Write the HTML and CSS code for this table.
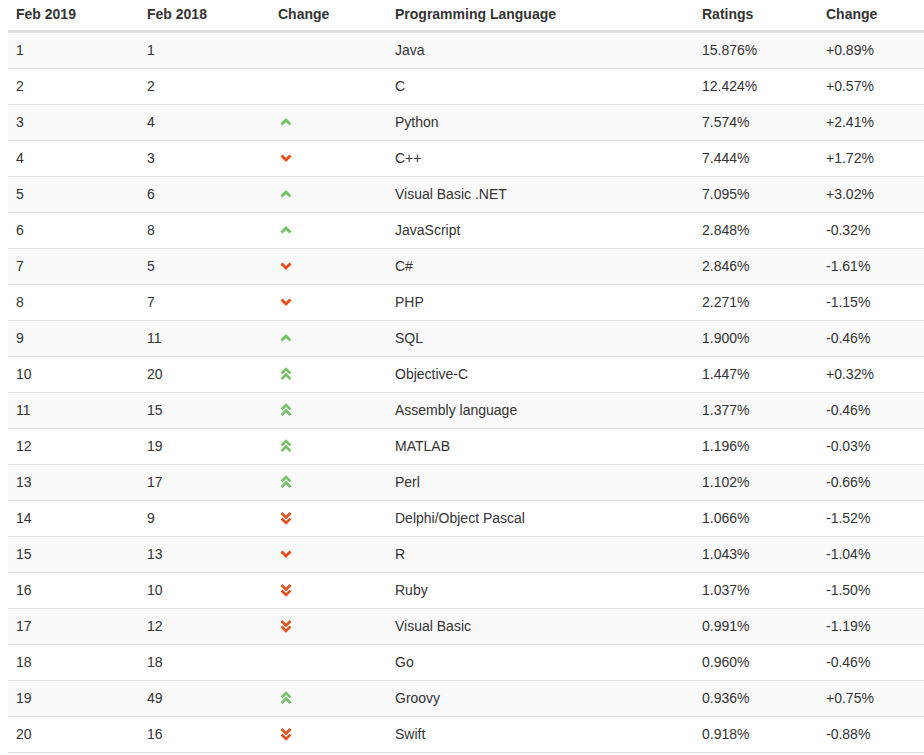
FILE: index.html
```html
<!DOCTYPE html>
<html>
<head>
<meta charset="utf-8">
<link rel="stylesheet" href="styles.css">
</head>
<body>
<svg width="0" height="0" class="defs">
  <defs>
    <symbol id="up1" viewBox="0 0 12 16"><polyline points="1.5,10.5 6,6 10.5,10.5" fill="none" stroke="currentColor" stroke-width="3"/></symbol>
    <symbol id="down1" viewBox="0 0 12 16"><polyline points="1.5,5.5 6,10 10.5,5.5" fill="none" stroke="currentColor" stroke-width="3"/></symbol>
    <symbol id="up2" viewBox="0 0 12 16"><polyline points="1.5,7.5 6,3 10.5,7.5" fill="none" stroke="currentColor" stroke-width="2.6"/><polyline points="1.5,13 6,8.5 10.5,13" fill="none" stroke="currentColor" stroke-width="2.6"/></symbol>
    <symbol id="down2" viewBox="0 0 12 16"><polyline points="1.5,3 6,7.5 10.5,3" fill="none" stroke="currentColor" stroke-width="2.6"/><polyline points="1.5,8.5 6,13 10.5,8.5" fill="none" stroke="currentColor" stroke-width="2.6"/></symbol>
  </defs>
</svg>
<table class="tbl">
  <thead>
    <tr><th class="c1">Feb 2019</th><th class="c2">Feb 2018</th><th class="c3">Change</th><th class="c4">Programming Language</th><th class="c5">Ratings</th><th class="c6">Change</th></tr>
  </thead>
  <tbody>
    <tr><td>1</td><td>1</td><td></td><td>Java</td><td>15.876%</td><td>+0.89%</td></tr>
    <tr><td>2</td><td>2</td><td></td><td>C</td><td>12.424%</td><td>+0.57%</td></tr>
    <tr><td>3</td><td>4</td><td><svg class="ic up"><use href="#up1"/></svg></td><td>Python</td><td>7.574%</td><td>+2.41%</td></tr>
    <tr><td>4</td><td>3</td><td><svg class="ic down"><use href="#down1"/></svg></td><td>C++</td><td>7.444%</td><td>+1.72%</td></tr>
    <tr><td>5</td><td>6</td><td><svg class="ic up"><use href="#up1"/></svg></td><td>Visual Basic .NET</td><td>7.095%</td><td>+3.02%</td></tr>
    <tr><td>6</td><td>8</td><td><svg class="ic up"><use href="#up1"/></svg></td><td>JavaScript</td><td>2.848%</td><td>-0.32%</td></tr>
    <tr><td>7</td><td>5</td><td><svg class="ic down"><use href="#down1"/></svg></td><td>C#</td><td>2.846%</td><td>-1.61%</td></tr>
    <tr><td>8</td><td>7</td><td><svg class="ic down"><use href="#down1"/></svg></td><td>PHP</td><td>2.271%</td><td>-1.15%</td></tr>
    <tr><td>9</td><td>11</td><td><svg class="ic up"><use href="#up1"/></svg></td><td>SQL</td><td>1.900%</td><td>-0.46%</td></tr>
    <tr><td>10</td><td>20</td><td><svg class="ic up"><use href="#up2"/></svg></td><td>Objective-C</td><td>1.447%</td><td>+0.32%</td></tr>
    <tr><td>11</td><td>15</td><td><svg class="ic up"><use href="#up2"/></svg></td><td>Assembly language</td><td>1.377%</td><td>-0.46%</td></tr>
    <tr><td>12</td><td>19</td><td><svg class="ic up"><use href="#up2"/></svg></td><td>MATLAB</td><td>1.196%</td><td>-0.03%</td></tr>
    <tr><td>13</td><td>17</td><td><svg class="ic up"><use href="#up2"/></svg></td><td>Perl</td><td>1.102%</td><td>-0.66%</td></tr>
    <tr><td>14</td><td>9</td><td><svg class="ic down"><use href="#down2"/></svg></td><td>Delphi/Object Pascal</td><td>1.066%</td><td>-1.52%</td></tr>
    <tr><td>15</td><td>13</td><td><svg class="ic down"><use href="#down1"/></svg></td><td>R</td><td>1.043%</td><td>-1.04%</td></tr>
    <tr><td>16</td><td>10</td><td><svg class="ic down"><use href="#down2"/></svg></td><td>Ruby</td><td>1.037%</td><td>-1.50%</td></tr>
    <tr><td>17</td><td>12</td><td><svg class="ic down"><use href="#down2"/></svg></td><td>Visual Basic</td><td>0.991%</td><td>-1.19%</td></tr>
    <tr><td>18</td><td>18</td><td></td><td>Go</td><td>0.960%</td><td>-0.46%</td></tr>
    <tr><td>19</td><td>49</td><td><svg class="ic up"><use href="#up2"/></svg></td><td>Groovy</td><td>0.936%</td><td>+0.75%</td></tr>
    <tr><td>20</td><td>16</td><td><svg class="ic down"><use href="#down2"/></svg></td><td>Swift</td><td>0.918%</td><td>-0.88%</td></tr>
  </tbody>
</table>
</body>
</html>
```
FILE: styles.css
```css
html, body {
  background: #ffffff;
}
body {
  margin: 0 0 0 8px;
  font-family: "Liberation Sans", Arial, sans-serif;
  font-size: 14px;
  color: #333333;
}
.defs {
  position: absolute;
  width: 0;
  height: 0;
  overflow: hidden;
}
.tbl {
  width: 916px;
  border-collapse: separate;
  border-spacing: 0;
  table-layout: fixed;
  border-bottom: 1px solid #dddddd;
}
.tbl th {
  text-align: left;
  font-weight: bold;
  line-height: 20px;
  padding: 4px 8px 6px;
  border-bottom: 2px solid #dddddd;
}
.tbl td {
  line-height: 20px;
  padding: 7px 8px 8px;
  border-top: 1px solid #dddddd;
  vertical-align: top;
}
.tbl tbody tr:nth-child(odd) td {
  background: #f9f9f9;
}
.c1 { width: 115px; }
.c2 { width: 115px; }
.c3 { width: 101px; }
.c4 { width: 291px; }
.c5 { width: 108px; }
.c6 { width: auto; }
.ic {
  display: block;
  width: 12px;
  height: 16px;
  margin: 2px 0 0 2px;
}
.up { color: #76c267; }
.down { color: #e8501d; }
```
